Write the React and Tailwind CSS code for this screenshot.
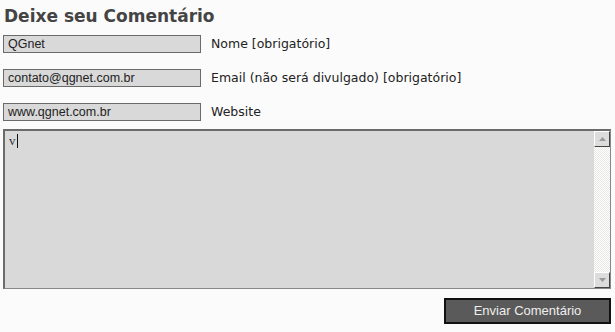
export default function App() {
  const fields = [
    { value: 'QGnet', label: 'Nome [obrigatório]' },
    { value: 'contato@qgnet.com.br', label: 'Email (não será divulgado) [obrigatório]' },
    { value: 'www.qgnet.com.br', label: 'Website' },
  ];

  return (
    <div className="w-[615px] h-[332px] bg-[#fbfbfb] overflow-hidden pl-[3px] pt-[5px]">
      <h3 className="text-[17px] leading-[22px] font-bold text-[#444] pl-[1px] font-['DejaVu_Sans',Verdana,sans-serif]">
        Deixe seu Comentário
      </h3>

      <div className="flex flex-col gap-[16px] mt-[8px]">
        {fields.map((f) => (
          <div key={f.label} className="flex items-center h-[18px]">
            <div className="w-[198px] h-[18px] bg-[#d9d9d9] border border-[#6b6b6b] pl-[4px] flex items-center text-[12.5px] text-[#222] font-['Liberation_Sans',Arial,sans-serif]">
              {f.value}
            </div>
            <span className="ml-[10px] text-[12.5px] text-[#222] font-['DejaVu_Sans',Verdana,sans-serif]">
              {f.label}
            </span>
          </div>
        ))}
      </div>

      {/* textarea */}
      <div className="mt-[8px] w-[608px] h-[160px] flex bg-[#d9d9d9] border-t-2 border-l-2 border-[#6b6b6b] border-r border-b border-r-[#888] border-b-[#888]">
        <div className="flex-1 pl-[4px] pt-[2px] flex items-start">
          <span className="text-[13px] leading-[16px] text-[#333] font-['Liberation_Serif','Times_New_Roman',serif]">v</span>
          <span className="w-[1px] h-[14px] bg-[#111] mt-[1px] ml-[1px]" />
        </div>
        <div className="w-[16px] flex flex-col bg-[repeating-conic-gradient(#e8e8e4_0_25%,#ffffff_0_50%)] bg-[length:2px_2px]">
          <div className="h-[16px] bg-[#dcdcdc] border-t border-l border-t-white border-l-white border-r border-b border-r-[#444] border-b-[#444] flex items-center justify-center">
            <svg width="7" height="4" viewBox="0 0 7 4"><path d="M0 4 L3.5 0 L7 4 Z" fill="#999" /></svg>
          </div>
          <div className="flex-1" />
          <div className="h-[16px] bg-[#dcdcdc] border-t border-l border-t-white border-l-white border-r border-b border-r-[#444] border-b-[#444] flex items-center justify-center">
            <svg width="7" height="4" viewBox="0 0 7 4"><path d="M0 0 L3.5 4 L7 0 Z" fill="#999" /></svg>
          </div>
        </div>
      </div>

      <div className="flex justify-end w-[608px] mt-[9px]">
        <button className="w-[167px] h-[26px] bg-[#5a5a5a] border-2 border-[#111] text-[#eee] text-[13px] font-['Liberation_Sans',Arial,sans-serif]">
          Enviar Comentário
        </button>
      </div>
    </div>
  );
}
